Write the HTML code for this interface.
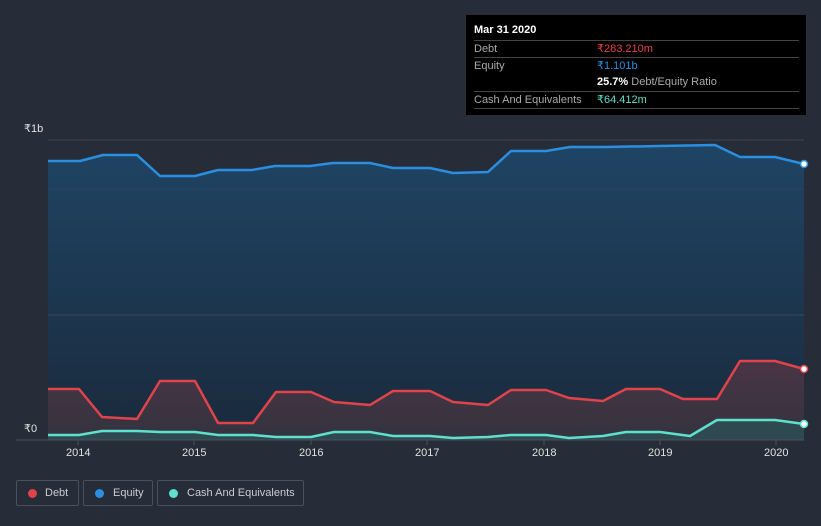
<html><head><style>
body{margin:0;width:821px;height:526px;background:#262c38;font-family:"Liberation Sans",sans-serif;overflow:hidden;position:relative}
.tt{position:absolute;left:466px;top:15px;width:340px;height:100px;background:#000;color:#aaa;font-size:11px}
.tt .r{position:absolute;left:8px;width:325px;border-top:1px solid #444;height:17px;line-height:17px}
.tt span{position:absolute;left:123px}
.leg{position:absolute;top:480px;height:26px;border:1px solid #4a505c;border-radius:2px;color:#c8ccd2;font-size:11px;line-height:25px;box-sizing:border-box;padding-left:28px;white-space:nowrap}
.leg i{position:absolute;left:11px;top:8px;width:9px;height:9px;border-radius:50%}
.ax{position:absolute;color:#e0e0e0;font-size:11px}
</style></head><body>
<svg width="821" height="526" style="position:absolute;left:0;top:0">
<defs><linearGradient id="g" x1="0" y1="0" x2="0" y2="1"><stop offset="0" stop-color="#1f4464"/><stop offset="1" stop-color="#1a2a3c"/></linearGradient>
<linearGradient id="d" x1="0" y1="0" x2="0" y2="1"><stop offset="0" stop-color="#4a3445"/><stop offset="1" stop-color="#33333f"/></linearGradient></defs>
<line x1="48" y1="140" x2="804" y2="140" stroke="#3e4552"/>
<path d="M48,161 L80,161 103,155 137,155 160,176 195,176 218,170 252,170 275,166 310,166 333,163 370,163 393,168 430,168 453,173 488,172 511,151 546,151 570,147 605,147 660,146 715,145 740,157 775,157 804,164 L804,440 L48,440Z" fill="url(#g)"/>
<line x1="48" y1="315" x2="804" y2="315" stroke="#2f4a60"/>
<line x1="48" y1="189" x2="804" y2="189" stroke="#2f4a60" opacity=".5"/>
<path d="M48,389 L79,389 102,417 137,419 160,381 195,381 218,423 253,423 276,392 311,392 334,402 370,405 393,391 430,391 453,402 488,405 511,390 546,390 569,398 603,401 626,389 660,389 683,399 717,399 740,361 775,361 804,369 L804,440 L48,440Z" fill="url(#d)"/>
<path d="M48,435 L79,435 102,431 137,431 160,432 195,432 218,435 253,435 276,437 311,437 334,432 370,432 393,436 430,436 453,438 488,437 511,435 546,435 569,438 603,436 626,432 660,432 690,436 717,420 775,420 804,424 L804,440 L48,440Z" fill="#2e4a50"/>
<path d="M48,161 L80,161 103,155 137,155 160,176 195,176 218,170 252,170 275,166 310,166 333,163 370,163 393,168 430,168 453,173 488,172 511,151 546,151 570,147 605,147 660,146 715,145 740,157 775,157 804,164" fill="none" stroke="#2a8fe0" stroke-width="2.5" stroke-linejoin="round"/>
<path d="M48,389 L79,389 102,417 137,419 160,381 195,381 218,423 253,423 276,392 311,392 334,402 370,405 393,391 430,391 453,402 488,405 511,390 546,390 569,398 603,401 626,389 660,389 683,399 717,399 740,361 775,361 804,369" fill="none" stroke="#e0434a" stroke-width="2.5" stroke-linejoin="round"/>
<path d="M48,435 L79,435 102,431 137,431 160,432 195,432 218,435 253,435 276,437 311,437 334,432 370,432 393,436 430,436 453,438 488,437 511,435 546,435 569,438 603,436 626,432 660,432 690,436 717,420 775,420 804,424" fill="none" stroke="#5ee0cc" stroke-width="2.5" stroke-linejoin="round"/>
<line x1="16" y1="440" x2="804" y2="440" stroke="#4a505c"/>
<g stroke="#4a505c"><line x1="78" y1="440" x2="78" y2="445"/><line x1="194" y1="440" x2="194" y2="445"/><line x1="311" y1="440" x2="311" y2="445"/><line x1="427" y1="440" x2="427" y2="445"/><line x1="544" y1="440" x2="544" y2="445"/><line x1="660" y1="440" x2="660" y2="445"/><line x1="776" y1="440" x2="776" y2="445"/></g>
<circle cx="804" cy="164" r="3.5" fill="#fff" stroke="#2a8fe0" stroke-width="1.5"/>
<circle cx="804" cy="369" r="3.5" fill="#fff" stroke="#e0434a" stroke-width="1.5"/>
<circle cx="804" cy="424" r="3.5" fill="#fff" stroke="#5ee0cc" stroke-width="1.5"/>
</svg>
<div class="ax" style="left:24px;top:122px">₹1b</div>
<div class="ax" style="left:24px;top:422px">₹0</div>
<div class="ax" style="left:66px;top:447px">2014</div><div class="ax" style="left:182px;top:447px">2015</div><div class="ax" style="left:299px;top:447px">2016</div><div class="ax" style="left:415px;top:447px">2017</div><div class="ax" style="left:532px;top:447px">2018</div><div class="ax" style="left:648px;top:447px">2019</div><div class="ax" style="left:764px;top:447px">2020</div>
<div class="tt">
<div style="position:absolute;left:8px;top:9px;color:#fff;font-weight:bold">Mar 31 2020</div>
<div class="r" style="top:25px">Debt<span style="color:#e8434a">₹283.210m</span></div>
<div class="r" style="top:42px">Equity<span style="color:#2a90e0">₹1.101b</span></div>
<div class="r" style="top:59px;border:0"><span><b style="color:#fff">25.7%</b> Debt/Equity Ratio</span></div>
<div class="r" style="top:76px">Cash And Equivalents<span style="color:#5ee0cc">₹64.412m</span></div>
<div class="r" style="top:93px;height:0"></div>
</div>
<div class="leg" style="left:16px;width:63px;padding-left:28px"><i style="background:#e0434a"></i>Debt</div>
<div class="leg" style="left:83px;width:70px;padding-left:29px"><i style="background:#2a8fe0"></i>Equity</div>
<div class="leg" style="left:157px;width:147px;padding-left:29px"><i style="background:#5ee0cc"></i>Cash And Equivalents</div>
</body></html>
